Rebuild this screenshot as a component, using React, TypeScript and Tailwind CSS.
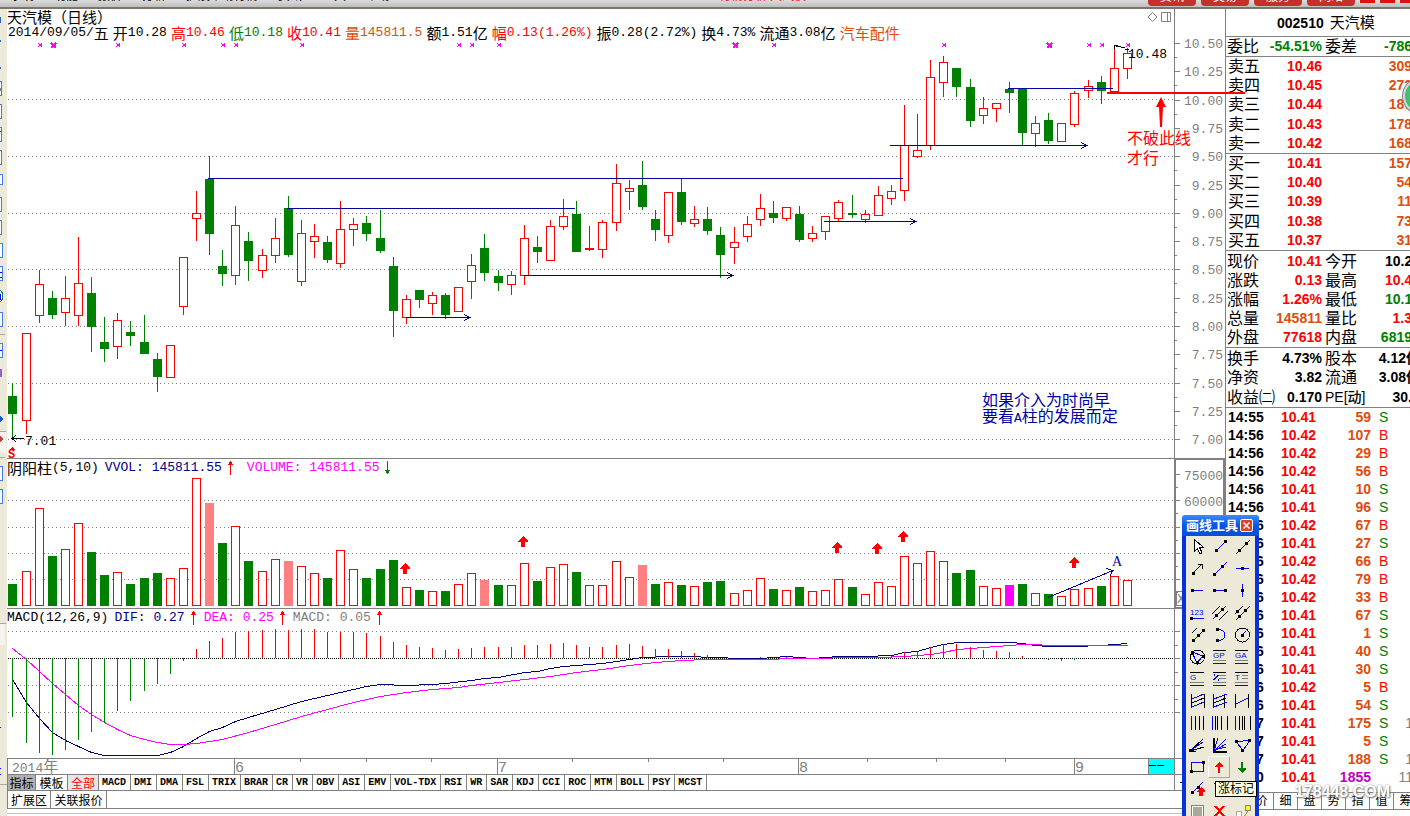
import type { ReactNode } from "react";

const RED = "#ff0000";
const GREEN = "#008000";
const GRAY = "#808080";
const NAVY = "#00007f";
const PEN = "#0000a0";
const PINK = "#ff00ff";

type Tone = "r" | "g";

// tone, high, body top, body bottom, low, volume top
type Bar = [Tone, number, number, number, number, number];

const bars: Bar[] = [
  ["g", 383, 396, 414, 439, 584],
  ["r", 333, 333, 421, 434, 571],
  ["r", 270, 284, 316, 323, 508],
  ["g", 291, 298, 315, 319, 556],
  ["r", 276, 298, 313, 326, 549],
  ["r", 237, 283, 316, 326, 523],
  ["g", 277, 293, 327, 352, 552],
  ["g", 317, 342, 349, 362, 575],
  ["r", 313, 320, 347, 359, 572],
  ["g", 321, 332, 336, 346, 584],
  ["g", 315, 342, 354, 354, 578],
  ["g", 353, 359, 377, 392, 573],
  ["r", 345, 345, 378, 378, 578],
  ["r", 257, 257, 307, 315, 568],
  ["r", 191, 213, 219, 241, 478],
  ["g", 156, 179, 234, 255, 503],
  ["g", 250, 266, 274, 286, 543],
  ["r", 206, 225, 276, 285, 526],
  ["g", 232, 241, 261, 281, 561],
  ["r", 249, 255, 271, 278, 571],
  ["r", 218, 238, 256, 263, 559],
  ["g", 196, 208, 255, 257, 561],
  ["r", 220, 233, 282, 286, 566],
  ["r", 224, 236, 242, 258, 573],
  ["g", 236, 242, 260, 263, 578],
  ["r", 201, 229, 264, 268, 550],
  ["r", 218, 224, 230, 246, 569],
  ["g", 216, 223, 234, 241, 578],
  ["g", 210, 238, 251, 253, 569],
  ["g", 257, 266, 311, 337, 560],
  ["r", 295, 299, 318, 324, 587],
  ["g", 290, 290, 300, 308, 590],
  ["r", 292, 295, 304, 315, 591],
  ["g", 293, 295, 315, 319, 591],
  ["r", 287, 287, 312, 312, 584],
  ["r", 254, 265, 282, 299, 573],
  ["g", 234, 248, 273, 281, 580],
  ["g", 270, 276, 283, 291, 585],
  ["r", 271, 275, 285, 295, 585],
  ["r", 225, 238, 276, 285, 563],
  ["g", 236, 247, 252, 263, 581],
  ["r", 220, 226, 261, 261, 567],
  ["r", 199, 216, 227, 230, 564],
  ["g", 201, 214, 252, 252, 572],
  ["r", 226, 248, 250, 251, 585],
  ["r", 220, 222, 250, 258, 585],
  ["r", 164, 183, 223, 231, 561],
  ["r", 180, 188, 192, 210, 577],
  ["g", 161, 185, 207, 210, 565],
  ["g", 210, 219, 230, 241, 584],
  ["r", 192, 192, 236, 243, 582],
  ["g", 179, 192, 222, 225, 585],
  ["r", 206, 219, 224, 227, 586],
  ["g", 207, 219, 231, 235, 582],
  ["g", 227, 235, 255, 278, 581],
  ["r", 227, 242, 248, 264, 593],
  ["r", 216, 224, 237, 242, 590],
  ["r", 194, 208, 220, 226, 578],
  ["g", 201, 213, 218, 223, 589],
  ["r", 207, 207, 219, 221, 590],
  ["g", 206, 214, 240, 242, 587],
  ["r", 226, 233, 239, 242, 591],
  ["r", 216, 216, 232, 240, 590],
  ["r", 200, 202, 219, 222, 579],
  ["g", 195, 213, 215, 218, 587],
  ["r", 210, 214, 220, 223, 594],
  ["r", 186, 195, 216, 216, 582],
  ["r", 185, 191, 199, 205, 586],
  ["r", 105, 145, 191, 201, 556],
  ["r", 114, 150, 157, 158, 563],
  ["r", 60, 77, 146, 150, 551],
  ["r", 56, 62, 83, 97, 561],
  ["g", 68, 68, 87, 97, 573],
  ["g", 79, 87, 121, 127, 570],
  ["r", 97, 108, 116, 124, 586],
  ["r", 103, 103, 109, 122, 588],
  ["g", 82, 89, 93, 113, 585],
  ["g", 88, 88, 133, 146, 584],
  ["r", 116, 123, 134, 147, 593],
  ["g", 113, 120, 141, 144, 594],
  ["r", 123, 123, 142, 142, 596],
  ["r", 91, 93, 125, 127, 589],
  ["r", 80, 86, 91, 98, 588],
  ["g", 76, 82, 91, 104, 586],
  ["r", 48, 68, 92, 92, 576],
  ["r", 48, 53, 69, 79, 580],
];

const specialVolume: Record<number, string> = {
  15: "#ff8080",
  21: "#ff8080",
  36: "#ff8080",
  48: "#ff8080",
  76: PINK,
};

const ZERO = 658;

// tip of every MACD stick, one for each bar
const sticks = [
  717, 743, 753, 755, 750, 740, 732, 723, 711, 701, 691, 684, 674, 661, 649, 641, 638, 632, 631, 630, 629, 630, 629,
  629, 632, 632, 632, 633, 636, 642, 645, 647, 648, 650, 649, 648, 647, 647, 647, 645, 645, 644, 643, 645, 647, 647,
  645, 644, 646, 649, 649, 651, 653, 655, 658, 658, 658, 657, 657, 657, 658, 658, 658, 657, 657, 657, 657, 656, 652,
  651, 647, 644, 644, 647, 650, 651, 652, 656, 658, 660, 661, 660, 658, 658, 658, 657,
];

const dif =
  "12,679 26,702 39,718 52,732 65,740 78,746 91,752 104,755 157,755 170,752 183,746 196,738 209,731 222,727 235,721 248,717 275,709 301,701 327,695 353,689 366,686 380,684 406,685 432,684 445,683 471,680 484,678 498,677 524,672 537,671 550,668 563,666 602,663 616,661 629,659 642,657 668,656 694,656 707,657 720,657 734,658 760,658 786,656 799,657 812,658 838,656 865,656 891,655 904,652 917,651 930,647 943,644 957,642 1010,642 1022,643 1035,645 1048,646 1075,646 1101,645 1114,644 1127,643";
const dea =
  "12,648 26,659 39,671 52,683 65,694 78,705 91,714 104,722 117,729 130,735 144,739 157,742 170,744 183,744 196,743 222,739 248,732 275,724 301,716 327,709 353,702 380,696 406,692 432,689 458,687 471,685 498,682 524,679 550,676 576,672 602,669 629,665 655,662 681,660 707,659 734,659 825,658 838,657 878,657 904,656 917,655 930,654 943,652 957,649 983,647 1009,645 1022,644 1035,644 1048,645 1127,645";

const barX = (i: number) => 12 + 13 * i + Math.ceil(i / 9);

const readout = [
  { label: "2014/09/05/", tail: "五", tone: "text-black" },
  { head: "开", label: "10.28", tone: "text-black" },
  { head: "高", label: "10.46", tone: "text-[#ff0000]" },
  { head: "低", label: "10.18", tone: "text-[#008000]" },
  { head: "收", label: "10.41", tone: "text-[#ff0000]" },
  { head: "量", label: "145811.5", tone: "text-[#e04c0c]" },
  { head: "额", label: "1.51", tail: "亿", tone: "text-black" },
  { head: "幅", label: "0.13(1.26%)", tone: "text-[#ff0000]" },
  { head: "振", label: "0.28(2.72%)", tone: "text-black" },
  { head: "换", label: "4.73%", tone: "text-black" },
  { head: "流通", label: "3.08", tail: "亿", tone: "text-black" },
  { head: "汽车配件", label: "", tone: "text-[#e04c0c]" },
];

const signals = [40, 118, 184, 223, 236, 302, 459, 472, 499, 774, 944, 1089, 1102, 1128];
const strongSignals = [53, 735, 1049];

const indicators = [
  "MACD", "DMI", "DMA", "FSL", "TRIX", "BRAR", "CR", "VR", "OBV", "ASI", "EMV", "VOL-TDX", "RSI", "WR", "SAR", "KDJ",
  "CCI", "ROC", "MTM", "BOLL", "PSY", "MCST",
];

interface Depth {
  label: string;
  price: string;
  size: string;
}

const asks: Depth[] = [
  { label: "卖五", price: "10.46", size: "309" },
  { label: "卖四", price: "10.45", size: "272" },
  { label: "卖三", price: "10.44", size: "187" },
  { label: "卖二", price: "10.43", size: "178" },
  { label: "卖一", price: "10.42", size: "168" },
];

const bids: Depth[] = [
  { label: "买一", price: "10.41", size: "157" },
  { label: "买二", price: "10.40", size: "54" },
  { label: "买三", price: "10.39", size: "11" },
  { label: "买四", price: "10.38", size: "73" },
  { label: "买五", price: "10.37", size: "31" },
];

const R = "text-[#ff0000]";
const G = "text-[#008000]";
const O = "text-[#e04c0c]";
const K = "text-black";

const quotes = [
  ["现价", "10.41", R, "今开", "10.28", K],
  ["涨跌", "0.13", R, "最高", "10.46", R],
  ["涨幅", "1.26%", R, "最低", "10.18", G],
  ["总量", "145811", O, "量比", "1.3", R + " pr-2"],
  ["外盘", "77618", R, "内盘", "6819", G + " pr-2"],
];

const basics = [
  ["换手", "4.73%", K, "股本", "4.12亿", K],
  ["净资", "3.82", K, "流通", "3.08亿", K],
  ["收益㈡", "0.170", K, "PE[动]", "30.", K + " pr-2"],
];

const trades = [
  ["14:55", "10.41", "59", "S", ""],
  ["14:56", "10.42", "107", "B", ""],
  ["14:56", "10.42", "29", "B", ""],
  ["14:56", "10.42", "56", "B", ""],
  ["14:56", "10.41", "10", "S", ""],
  ["14:56", "10.41", "96", "S", ""],
  ["14:56", "10.42", "67", "B", ""],
  ["14:56", "10.41", "27", "S", ""],
  ["14:56", "10.42", "66", "B", ""],
  ["14:56", "10.42", "79", "B", ""],
  ["14:56", "10.42", "33", "B", ""],
  ["14:56", "10.41", "67", "S", ""],
  ["14:56", "10.41", "1", "S", ""],
  ["14:56", "10.41", "40", "S", ""],
  ["14:56", "10.41", "30", "S", ""],
  ["14:56", "10.42", "5", "B", ""],
  ["14:56", "10.41", "54", "S", ""],
  ["14:57", "10.41", "175", "S", "1"],
  ["14:57", "10.41", "5", "S", ""],
  ["14:57", "10.41", "188", "S", "1"],
  ["15:00", "10.41", "1855", "", "11"],
];

function Grid({ rows }: { rows: number[] }) {
  return (
    <>
      {rows.map((y) => (
        <line key={y} x1="8" x2="1174" y1={y + 0.5} y2={y + 0.5} stroke={GRAY} strokeDasharray="1 3" />
      ))}
    </>
  );
}

function Pen({ x1, x2, y, arrow }: { x1: number; x2: number; y: number; arrow?: boolean }) {
  return (
    <g stroke={PEN} fill="none">
      <line x1={x1} x2={x2} y1={y + 0.5} y2={y + 0.5} />
      {arrow && <path d={`M${x2 - 7} ${y - 2.5}l6 3l-6 3M${x2 - 3} ${y + 0.5}h3`} />}
    </g>
  );
}

function TrendArrow({ down }: { down?: boolean }) {
  return (
    <svg className="ml-[6px]" width="5" height="14" viewBox="0 0 5 14" shapeRendering="crispEdges" aria-hidden="true">
      {down ? (
        <path d="M2 0h1v9h2v1h-1v2h-1v1h-1v-1h-1v-2h-1v-1h2z" fill={GREEN} />
      ) : (
        <path d="M2 0h1v1h1v2h1v1h-2v10h-1v-10h-2v-1h1v-2h1z" fill={RED} />
      )}
    </svg>
  );
}

function PriceChart() {
  return (
    <svg className="block h-[417px] w-full" shapeRendering="crispEdges" role="img" aria-label="日线">
      <g transform="translate(-7 -41)">
        <Grid rows={[99, 156, 213, 269, 326, 383, 439]} />
        {signals.map((x) => (
          <path key={x} d={`M${x - 2} 43l4 4M${x + 2} 43l-4 4M${x - 1} 45h3`} stroke={PINK} strokeWidth="1.4" />
        ))}
        {strongSignals.map((x) => (
          <path key={x} d={`M${x - 2} 43l5 5M${x + 3} 43l-5 5M${x - 1} 45.5h4`} stroke={PINK} strokeWidth="2" />
        ))}
        {bars.map(([tone, high, top, bottom, low], i) => {
          const x = barX(i);
          const color = tone === "r" ? RED : GREEN;
          return (
            <g key={i}>
              <rect x={x} y={high} width="1" height={low - high} fill={color} />
              <rect
                x={x - 3.5}
                y={top + 0.5}
                width="8"
                height={bottom - top - 1}
                stroke={color}
                fill={tone === "r" ? "#fff" : color}
              />
            </g>
          );
        })}
        <Pen x1={208} x2={903} y={178} />
        <Pen x1={287} x2={575} y={208} />
        <Pen x1={406} x2={471} y={317} arrow />
        <Pen x1={524} x2={734} y={275} arrow />
        <Pen x1={824} x2={917} y={221} arrow />
        <Pen x1={890} x2={1088} y={145} arrow />
        <Pen x1={1008} x2={1113} y={88} />
        <path d="M1114.5 49v-4M1114 45.500h4M1116 46.500h5M1121 47.500h4M1125 49.500h4" stroke="#000" fill="none" />
        <path d="M12 438.500h12M16 435l-4 3.500l4 3.500" stroke="#000" fill="none" />
        <path d="M9 450l3-3l3 3z" fill={RED} />
        <g className="font-['Liberation_Mono',monospace] text-[13px]">
          <text x="1128" y="58">10.48</text>
          <text x="25" y="445">7.01</text>
          <text x="8" y="458" fill={RED} className="text-xs font-bold">S</text>
        </g>
        <g fill={PEN} className="font-['Noto_Sans_CJK_SC',sans-serif] text-base">
          <text x="982" y="406">如果介入为时尚早</text>
          <text x="982" y="422">
            要看<tspan className="font-['Liberation_Mono',monospace] text-[13px]">A</tspan>柱的发展而定
          </text>
        </g>
      </g>
    </svg>
  );
}

function VolumeChart() {
  const marks = [
    [405, 563], [523, 536], [837, 542], [877, 543], [903, 531], [1074, 557],
  ];
  return (
    <svg className="block h-[132px] w-full" shapeRendering="crispEdges" role="img" aria-label="成交量">
      <g transform="translate(-7 -476)">
        <Grid rows={[500, 527, 553, 579]} />
        {bars.map((bar, i) => {
          const special = specialVolume[i];
          const color = special ?? (bar[0] === "r" ? RED : GREEN);
          const hollow = !special && bar[0] === "r";
          return (
            <rect
              key={i}
              x={barX(i) - 3.5}
              y={bar[5] + 0.5}
              width="8"
              height={605 - bar[5]}
              stroke={color}
              fill={hollow ? "#fff" : color}
            />
          );
        })}
        {marks.map(([x, y]) => (
          <path key={x} d={`M${x} ${y}l5 5v1h-3v5h-4v-5h-3v-1z`} fill={RED} />
        ))}
        <path d="M1048 597.500L1113 570.500M1106 568.500l7 2l-3 5" stroke={PEN} fill="none" />
        <text x="1112" y="566" fill={PEN} className="font-['Liberation_Serif',serif] text-sm">A</text>
      </g>
    </svg>
  );
}

function MacdChart() {
  return (
    <svg className="block h-[132px] w-full" shapeRendering="crispEdges" role="img" aria-label="MACD">
      <g transform="translate(-7 -626)">
        <Grid rows={[631, 685, 712]} />
        <line x1="8" x2="1174" y1="658.5" y2="658.5" stroke="#000" strokeDasharray="1 1" />
        <g fill="none">
          <polyline points={dif} stroke={NAVY} transform="translate(0.5 0.5)" />
          <polyline points={dea} stroke={PINK} transform="translate(0.5 0.5)" />
        </g>
        {sticks.map((y, i) => (
          <rect
            key={i}
            x={barX(i)}
            y={Math.min(y, ZERO)}
            width="1"
            height={Math.abs(y - ZERO)}
            fill={y > ZERO ? GREEN : RED}
          />
        ))}
      </g>
    </svg>
  );
}

function DateAxis() {
  const months = [
    [234, "6"], [497, "7"], [798, "8"], [1074, "9"],
  ] as const;
  return (
    <div className="flex h-4 justify-between border-t border-l border-[#808080]">
      <svg className="block h-full min-w-0 flex-1" shapeRendering="crispEdges" role="img" aria-label="日期">
        <g transform="translate(-8 0)">
          <path
            d="M47.500 0v3M300.500 0v3M366.500 0v3M431.500 0v3M572.500 0v3M648.500 0v3M723.500 0v3M867.500 0v3M936.500 0v3M1005.500 0v3"
            stroke={GRAY}
          />
          <g fill={GRAY} className="font-['Liberation_Mono','Noto_Sans_CJK_SC',monospace] text-[13px]">
            <text x="12" y="13">
              2014<tspan className="text-[15px]">年</tspan>
            </text>
            {months.map(([x, name]) => (
              <g key={name}>
                <rect x={x} y="0" width="1" height="15" />
                <text x={x + 1} y="13" className="text-[15px]">{name}</text>
              </g>
            ))}
          </g>
        </g>
      </svg>
      <svg className="block h-full w-[26px] shrink-0 border-l border-[#808080] bg-[#00ffff]" shapeRendering="crispEdges" aria-hidden="true">
        <path d="M0 6.500h7M8 6.500h7" stroke="#000" />
      </svg>
    </div>
  );
}

function PriceAxis() {
  const prices = Array.from({ length: 15 }, (_, i) => ({
    label: (10.5 - i * 0.25).toFixed(2),
    y: Math.round(43 + i * 28.3),
  }));
  return (
    <svg
      className="block h-[782px] w-[51px] shrink-0"
      shapeRendering="crispEdges"
      role="img"
      aria-label="坐标"
    >
      <g transform="translate(-1174 -9)" fill={GRAY} className="font-['Liberation_Mono',monospace] text-[13px]">
        <rect x="1174" y="9" width="1" height="782" />
        {prices.map(({ label, y }, i) => (
          <g key={label}>
            <rect x="1174" y={y} width="6" height="1" />
            {i < 14 && <rect x="1174" y={y + 14} width="3" height="1" />}
            <text x="1223" y={y + 5} textAnchor="end">{label}</text>
          </g>
        ))}
        <rect x="1175" y="459" width="49" height="149" fill="none" stroke={GRAY} strokeWidth="2" />
        {[474, 500, 527, 553, 579].map((y) => (
          <g key={y}>
            <rect x="1174" y={y} width="6" height="1" />
            <rect x="1174" y={y + 13} width="4" height="1" />
          </g>
        ))}
        <text x="1223" y="480" textAnchor="end">75000</text>
        <text x="1223" y="506" textAnchor="end">60000</text>
        <path d="M1176 591.500h48M1176.500 591v14h48" fill="none" stroke={GRAY} />
        <text x="1177" y="603">X10</text>
        {[631, 645, 658, 672, 685, 699, 712].map((y) => (
          <rect key={y} x="1174" y={y} width={y % 27 === 10 ? 6 : 4} height="1" />
        ))}
        <path d="M1174 758.500h51M1174 774.500h51M1174 790.500h51" stroke={GRAY} />
        <path d="M1180 782.500h4" stroke="#000" />
      </g>
    </svg>
  );
}

function IndicatorTabs() {
  return (
    <nav className="flex h-[17px] border-y border-l border-[#808080] font-['Noto_Sans_CJK_SC',sans-serif] text-xs leading-[15px]">
      <button type="button" className="w-[28px] border-r border-[#808080] bg-[#b0b0b0]">指标</button>
      <button type="button" className="w-[32px] border-r border-[#808080]">模板</button>
      <button type="button" className="w-[31px] border-r border-[#808080] bg-[#e6e6e6] text-[#ff0000]">全部</button>
      {indicators.map((name) => (
        <button
          key={name}
          type="button"
          className="border-r border-[#808080] pr-1 pl-[3px] font-['Liberation_Mono',monospace] text-[10px] font-bold"
        >
          {name}
        </button>
      ))}
    </nav>
  );
}

function DepthTable({ rows }: { rows: Depth[] }) {
  return (
    <table className="h-[96px] w-[194px] table-fixed">
      <tbody>
        {rows.map((row) => (
          <tr key={row.label} className="h-[19px]">
            <th className="w-[40px] p-0 pl-[2px] text-left text-base leading-[19px] font-normal">{row.label}</th>
            <td className="w-[56px] p-0 text-right text-sm leading-[19px] font-bold text-[#ff0000]">{row.price}</td>
            <td className="p-0 pr-2 text-right text-sm leading-[19px] font-bold text-[#e04c0c]">{row.size}</td>
          </tr>
        ))}
      </tbody>
    </table>
  );
}

function QuoteTable({ rows }: { rows: string[][] }) {
  return (
    <table className="w-[194px] table-fixed whitespace-nowrap">
      <tbody>
        {rows.map(([left, value, tone, right, other, otherTone]) => (
          <tr key={left} className="h-[19px]">
            <th className="w-[40px] p-0 pl-px text-left text-base leading-[19px] font-normal">{left}</th>
            <td className={`w-[56px] p-0 text-right text-sm leading-[19px] font-bold ${tone}`}>{value}</td>
            <th className="w-[40px] p-0 pl-[3px] text-left text-base leading-[19px] font-normal">
              {right.startsWith("PE") ? <span className="text-sm font-medium">{right}</span> : right}
            </th>
            <td className={`p-0 text-right text-sm leading-[19px] font-bold ${otherTone}`}>{other}</td>
          </tr>
        ))}
      </tbody>
    </table>
  );
}

function SidePanel() {
  return (
    <aside className="flex w-[185px] shrink-0 flex-col overflow-hidden border-l border-[#808080] font-['Liberation_Sans','Noto_Sans_CJK_SC',sans-serif]">
      <h2 className="flex h-[27px] items-center gap-[6px] pl-[51px] text-sm font-bold whitespace-nowrap">
        002510 <span className="text-[15px] font-normal">天汽模</span>
      </h2>
      <div className="h-5 border-t border-[#808080]">
        <QuoteTable rows={[["委比", "-54.51%", G, "委差", "-786", G + " pr-2"]]} />
      </div>
      <div className="border-t border-[#808080]">
        <DepthTable rows={asks} />
      </div>
      <div className="border-t border-[#808080]">
        <DepthTable rows={bids} />
      </div>
      <div className="h-[97px] border-t border-[#808080] pt-px">
        <QuoteTable rows={quotes} />
      </div>
      <div className="h-[61px] border-y border-[#808080] pt-px">
        <QuoteTable rows={basics} />
      </div>
      <table className="w-[187px] table-fixed text-sm font-bold">
        <tbody>
          {trades.map(([time, price, size, side, count], i) => (
            <tr key={i} className="h-[18px] leading-[18px]">
              <td className="w-[55px] p-0 pl-[2px]">{time}</td>
              <td className="w-[40px] p-0 text-[#ff0000]">{price}</td>
              <td className={`w-[50px] p-0 text-right ${side ? "text-[#e04c0c]" : "text-[#c000c0]"}`}>{size}</td>
              <td className={`w-[20px] p-0 pl-2 font-normal ${side === "B" ? R : G}`}>{side}</td>
              <td className="p-0 text-right font-normal text-[#808080]">{count}</td>
            </tr>
          ))}
        </tbody>
      </table>
      <nav className="mt-[6px] flex h-[18px] shrink-0 border-y border-[#808080] text-xs leading-4">
        {["笔", "价", "细", "盘", "势", "指", "值", "筹"].map((name) => (
          <button key={name} type="button" className="w-6 shrink-0 border-r border-[#808080]">
            {name}
          </button>
        ))}
      </nav>
    </aside>
  );
}

const B = "#0000ff";

function Dots({ at }: { at: number[][] }) {
  return (
    <>
      {at.map(([x, y]) => (
        <rect key={`${x}-${y}`} x={x - 1} y={y - 1} width="3" height="3" fill="#000" />
      ))}
    </>
  );
}

const glyph = "font-['Liberation_Sans',sans-serif] text-[8px]";

const tools: { name: string; icon: ReactNode }[] = [
  { name: "选择", icon: <path d="M8.500 3.500v12l3-3l2 5h2v-2l-2-4h4z" fill="#fff" stroke="#000" /> },
  { name: "线段", icon: <><path d="M8 15l9-9" stroke={B} /><Dots at={[[8, 14], [17, 5]]} /></> },
  { name: "直线", icon: <><path d="M6 18L20 4" stroke="#000" /><path d="M9 15l7-7" stroke={B} /><Dots at={[[9, 14], [16, 7]]} /></> },
  { name: "箭头", icon: <><path d="M6 16L16 6" stroke={B} /><path d="M12 6.500h4.500v4.500" fill="none" stroke="#000" /><Dots at={[[7, 15]]} /></> },
  { name: "射线", icon: <><path d="M6 17L19 4" stroke={B} /><Dots at={[[6, 16], [14, 8]]} /></> },
  { name: "价格线", icon: <><path d="M6 10.500h13" stroke={B} /><Dots at={[[12, 10]]} /></> },
  { name: "水平射线", icon: <><path d="M5 10.500h12" stroke={B} /><Dots at={[[6, 10]]} /></> },
  { name: "水平线段", icon: <><path d="M6 10.500h12" stroke={B} /><Dots at={[[6, 10], [17, 10]]} /></> },
  { name: "垂直线", icon: <><path d="M12.500 4v13" stroke={B} /><Dots at={[[12, 10]]} /></> },
  { name: "标注", icon: <><text x="4" y="13" fill={B} className={glyph}>123</text><path d="M4 16.500h14" stroke={B} /><Dots at={[[5, 16]]} /></> },
  { name: "平行线", icon: <><path d="M4 12L12 4M11 18L20 9" stroke="#000" /><path d="M5 17L18 4" stroke={B} /><Dots at={[[8, 13], [14, 7]]} /></> },
  { name: "平行射线", icon: <><path d="M5 12l8-8" stroke="#000" /><path d="M6 18L20 4" stroke={B} /><Dots at={[[9, 14], [15, 8], [7, 9]]} /></> },
  { name: "平行线段", icon: <><path d="M6 9l5-5" stroke="#000" /><path d="M7 17L18 6" stroke={B} /><Dots at={[[7, 16], [12, 11], [17, 6]]} /></> },
  { name: "圆弧", icon: <><path d="M9 5.500q8 0 8 5.500t-8 6" fill="none" stroke={B} /><Dots at={[[9, 5], [9, 16]]} /></> },
  { name: "圆", icon: <><circle cx="12.500" cy="11" r="7" fill="none" stroke="#000" /><path d="M12 11l4-4" stroke={B} /><Dots at={[[12, 11]]} /></> },
  { name: "外接圆", icon: <><circle cx="11.500" cy="11" r="7" fill="none" stroke="#000" /><path d="M6 6l11 4l-6 7z" fill="none" stroke={B} /><Dots at={[[6, 7], [17, 10], [11, 16]]} /></> },
  { name: "黄金价位", icon: <><path d="M5 4.500h13" stroke="#000" /><text x="5" y="12" fill={B} className={glyph}>GP</text><path d="M5 14.500h13" stroke={GRAY} /><path d="M5 17.500h13" stroke={B} /></> },
  { name: "黄金目标", icon: <><path d="M5 4.500h13" stroke="#000" /><text x="5" y="12" fill={B} className={glyph}>GA</text><path d="M5 14.500h13" stroke={GRAY} /><path d="M5 17.500h13" stroke={B} /></> },
  { name: "黄金分割", icon: <><path d="M4 4.500h14" stroke="#000" /><text x="4" y="12" fill={B} className={glyph}>G</text><path d="M4 14.500h14" stroke={GRAY} /><path d="M4 17.500h14" stroke={B} /></> },
  { name: "百分比线", icon: <><path d="M5 4.500h13" stroke="#000" /><path d="M6 12l4-5M6 7h1M10 12h1" stroke={B} strokeWidth="1.500" /><path d="M11 7.500h7M11 10.500h7M5 14.500h13" stroke={GRAY} /><path d="M5 17.500h13" stroke={B} /></> },
  { name: "波段线", icon: <><path d="M5 4.500h13" stroke="#000" /><text x="5" y="12" fill={B} className={glyph}>T</text><path d="M12 7.500h6M12 10.500h6M5 14.500h13" stroke={GRAY} /><path d="M5 17.500h13" stroke={B} /></> },
  { name: "线性回归", icon: <><path d="M5.500 4v14M18.500 4v14M6 13l12-5" stroke="#000" /><path d="M6 9l12-5M6 17l12-5" stroke={B} /></> },
  { name: "延长回归", icon: <><path d="M5.500 4v14M16.500 4v14M6 13l12-5" stroke="#000" /><path d="M6 9l13-5M6 17l13-5" stroke={B} /></> },
  { name: "回归线", icon: <><path d="M5.500 4v14M18.500 4v14" stroke="#000" /><path d="M6 14l12-6" stroke={B} /></> },
  { name: "周期线", icon: <><path d="M5.500 4v14" stroke={B} /><path d="M9.500 4v14M13.500 4v14M17.500 4v14" stroke="#000" /></> },
  { name: "费波拉契线", icon: <><path d="M4.500 4v14" stroke={B} /><path d="M7.500 4v14M9.500 4v14M13.500 4v14M19.500 4v14" stroke="#000" /></> },
  { name: "阶梯周期线", icon: <><path d="M5.500 4v14" stroke={B} /><path d="M9.500 4v14M12.500 4v14M14.500 4v14M20.500 4v14" stroke="#000" /></> },
  { name: "阻速线", icon: <><path d="M4 17L17 5M4 17l14-4M4 17h6" stroke="#000" /><path d="M5 16l12-8" stroke={B} /><Dots at={[[4, 16]]} /></> },
  { name: "甘氏线", icon: <><path d="M5.500 4v13M5 17.500h14" stroke="#000" strokeWidth="2" /><path d="M6 17l4-13M6 17L18 5M6 17l12-7M6 16l12-3" stroke={B} /></> },
  { name: "三角形", icon: <><path d="M6 7.500l14-1l-7 10z" fill="none" stroke={B} /><Dots at={[[6, 7], [19, 6], [12, 16]]} /></> },
  { name: "矩形", icon: <><rect x="5.500" y="6.500" width="12" height="9" fill="none" stroke={B} /><Dots at={[[5, 15], [17, 6]]} /></> },
  { name: "涨标记", icon: <path d="M11 6l4 4v1h-3v6h-2v-6h-3v-1z" fill={RED} /> },
  { name: "跌标记", icon: <path d="M12 17l-4-4v-1h3v-6h2v6h3v1z" fill={GREEN} /> },
  { name: "自动标记", icon: <><path d="M6 15L17 4" stroke={B} /><Dots at={[[6, 14], [12, 9]]} /><path d="M15 9l4 4v1h-2v4h-4v-4h-2v-1z" fill={RED} /></> },
  { name: "文字", icon: <path d="M6 5h10M11 5v12" stroke={B} /> },
  { name: "显隐", icon: <path d="M6 6h10v10h-10z" fill="none" stroke={B} /> },
  { name: "隐藏自画线", icon: <><rect x="5.500" y="5.500" width="12" height="12" fill="#fff" stroke={GRAY} /><rect x="7" y="7" width="9" height="9" fill="#aca899" /></> },
  { name: "删除", icon: <path d="M7 6l9 10M16 6L7 16" stroke={RED} strokeWidth="2" /> },
  { name: "画线管理", icon: <><path d="M6.500 11.500h5v6h-5zM14 17l4-6" fill="#fff" stroke="#aca899" /><circle cx="18" cy="8" r="3" fill="#ffff00" stroke={GRAY} /></> },
];

function DrawingPalette() {
  return (
    <section
      aria-label="画线工具"
      className="absolute top-[515px] right-[151px] w-[77px] rounded-t bg-[#0831d9] px-1 font-['Liberation_Sans','Noto_Sans_CJK_SC',sans-serif]"
    >
      <header className="-mx-1 flex h-[21px] items-center justify-between rounded-t bg-linear-to-b from-[#3c8cf8] via-[#0a55e6] to-[#0450d8] pr-[6px] pl-1 text-white">
        <h2 className="text-[13px] leading-4 font-bold whitespace-nowrap">画线工具</h2>
        <button
          type="button"
          aria-label="关闭"
          className="flex size-[13px] items-center justify-center rounded-[2px] border border-white bg-[#dd4422]"
        >
          <svg width="7" height="7" viewBox="0 0 7 7" aria-hidden="true">
            <path d="M0.500 0.500l6 6M6.500 0.500l-6 6" stroke="#fff" strokeWidth="1.500" />
          </svg>
        </button>
      </header>
      <div className="grid grid-cols-[22px_22px_22px] bg-[#ece9d8] pr-[3px]">
        {tools.map(({ name, icon }) => (
          <button
            key={name}
            type="button"
            aria-label={name}
            className={
              name === "涨标记"
                ? "size-[22px] border border-t-white border-r-[#aca899] border-b-[#aca899] border-l-white"
                : "size-[22px]"
            }
          >
            <svg
              className={name === "涨标记" ? "-m-px block size-[22px]" : "block size-[22px]"}
              viewBox="0 0 22 22"
              shapeRendering="crispEdges"
              aria-hidden="true"
            >
              {icon}
            </svg>
          </button>
        ))}
      </div>
      <span
        role="tooltip"
        className="absolute top-[266px] left-[33px] border border-black bg-[#ffffe1] px-[2px] text-xs leading-[14px] whitespace-nowrap"
      >
        涨标记
      </span>
    </section>
  );
}

// slice of the docked toolbar that stays visible at the window's left edge
function DockedToolbar() {
  const boxes = [81, 104, 127, 150, 174, 197, 220, 243, 266, 312, 343, 466, 489];
  return (
    <svg className="block w-[7px] shrink-0 bg-[#ece9d8]" shapeRendering="crispEdges" aria-hidden="true">
      <g transform="translate(0 -9)">
        {[17, 40, 67].map((y) => (
          <rect key={y} x="0" y={y} width="1" height={y === 17 ? 6 : 2} fill="#2a62c8" />
        ))}
        {boxes.map((y) => (
          <rect key={y} x="-6.500" y={y + 0.5} width={y > 240 || y === 174 ? 9 : 8} height={y === 174 ? 10 : 14} fill="#fff" stroke="#3c7fe8" />
        ))}
        <path d="M0 88h1v3h-1z" fill={GRAY} />
        <path d="M0 131h1v1h-1z" fill={RED} />
        <path d="M0 272.500h2M0 277.500h2M0 350.500h2" stroke={B} />
        <circle cx="-4" cy="296" r="7" fill="#fff" stroke="#008080" />
        <rect x="0" y="294" width="1" height="6" fill={B} />
        <rect x="0" y="369" width="2" height="8" fill="#9060d0" />
        <path d="M0 416l3 3l-3 4z" fill="#1058c0" />
        <path d="M0 334.500h5M0 431.500h6M0 457.500h5M0 623.500h6M0 784.500h7" stroke="#aca899" />
        <rect x="0" y="432" width="6" height="21" fill="#f6f4ec" />
        <path d="M0 435l3 4l-3 4z" fill="#c04040" />
        <rect x="0" y="624" width="5" height="21" fill="#f6f4ec" />
        <path d="M0 727h1v1h-1zM0 768h1v1h-1zM0 774h1v1h-1z" fill={B} />
      </g>
    </svg>
  );
}

function TopBar() {
  return (
    <header className="flex h-[9px] shrink-0 justify-between overflow-hidden border-b-2 border-[#7a766a] bg-linear-to-b from-[#dcdcdc] to-[#bebebe] font-['Noto_Sans_CJK_SC',sans-serif] text-xs leading-[14px] whitespace-nowrap">
      <nav className="-mt-[12px] flex gap-5 pl-[10px]">
        {["系统", "功能", "报价", "分析", "扩展市场行情", "资讯", "工具", "帮助"].map((name) => (
          <a key={name} href="#">{name}</a>
        ))}
      </nav>
      <p className="-mt-[12px] mr-[54px] ml-auto pr-[288px] text-[#ff0000]">行情分析 天汽模</p>
      <div className="-ml-[0px] flex gap-[5px]">
        {["资讯", "交易", "服务", "网站"].map((name) => (
          <button
            key={name}
            type="button"
            className="flex h-[6px] w-12 justify-center overflow-hidden rounded-b bg-[#c4302c] text-white"
          >
            <span className="-mt-[11px]">{name}</span>
          </button>
        ))}
        <i className="h-[3px] w-[15px] bg-[#e01010]" />
        <i className="h-[3px] w-[15px] bg-[#e01010]" />
        <i className="h-[3px] w-[10px] bg-[#e01010]" />
      </div>
    </header>
  );
}

export default function App() {
  return (
    <div className="relative flex h-screen flex-col overflow-hidden bg-white text-black">
      <TopBar />
      <div className="flex min-h-0 flex-1">
        <DockedToolbar />
        <main className="min-w-0 flex-1 font-['Liberation_Mono','Noto_Sans_CJK_SC',monospace] text-[13px]">
          <div className="flex">
            <div className="min-w-0 flex-1">
              <section>
                <div className="flex h-[15px] items-center justify-between pr-[2px]">
                  <h1 className="font-['Noto_Sans_CJK_SC',sans-serif] text-[15px] leading-4">天汽模（日线）</h1>
                  <svg width="25" height="12" viewBox="0 0 25 12" fill="none" stroke={GRAY} aria-hidden="true">
                    <path d="M5.500 1.500l4.500 4.500l-4.500 4.500l-4.500-4.500zM14.500 1.500h9v9h-9zM20.500 1.500v9" />
                  </svg>
                </div>
                <p className="flex h-[17px] items-center gap-1 overflow-hidden pl-px leading-4 whitespace-nowrap">
                  {readout.map(({ head, label, tail, tone }) => (
                    <span key={label + head} className={`flex items-center ${tone}`}>
                      {head && <span className="font-['Noto_Sans_CJK_SC',sans-serif] text-[15px]">{head}</span>}
                      {label}
                      {tail && <span className="font-['Noto_Sans_CJK_SC',sans-serif] text-[15px]">{tail}</span>}
                    </span>
                  ))}
                </p>
                <PriceChart />
              </section>
              <section className="border-t border-[#808080]">
                <p className="flex h-[17px] items-center leading-4 whitespace-nowrap">
                  <span className="font-['Noto_Sans_CJK_SC',sans-serif] text-[15px]">阴阳柱</span>(5,10)
                  <span className="ml-[6px] text-[#00007f]">VVOL: 145811.55</span>
                  <TrendArrow />
                  <span className="ml-[14px] text-[#ff00ff]">VOLUME: 145811.55</span>
                  <TrendArrow down />
                </p>
                <VolumeChart />
              </section>
              <section className="border-t border-[#808080]">
                <p className="flex h-[17px] items-center leading-4 whitespace-nowrap">
                  MACD(12,26,9)
                  <span className="ml-[6px] text-[#00007f]">DIF: 0.27</span>
                  <TrendArrow />
                  <span className="ml-2 text-[#ff00ff]">DEA: 0.25</span>
                  <TrendArrow />
                  <span className="ml-2 text-[#808080]">MACD: 0.05</span>
                  <TrendArrow />
                </p>
                <MacdChart />
              </section>
              <DateAxis />
              <IndicatorTabs />
            </div>
            <PriceAxis />
          </div>
          <nav className="flex h-[18px] border-b border-l border-[#808080] font-['Noto_Sans_CJK_SC',sans-serif] text-xs leading-4">
            <button type="button" className="w-[43px] border-r border-[#808080]">扩展区</button>
            <button type="button" className="w-14 border-r border-[#808080]">关联报价</button>
          </nav>
          <div className="mt-1 border-t border-[#c0c0c0]" />
        </main>
        <SidePanel />
      </div>

      <div className="absolute top-[92px] right-[165px] w-[138px] border-t-2 border-[#ff0000] font-['Noto_Sans_CJK_SC',sans-serif] text-base leading-5 text-[#ff0000]">
        <svg className="mt-[3px] ml-[48px] block" width="12" height="30" viewBox="0 0 12 30" aria-hidden="true">
          <path d="M6 0l5 10h-3l-1 20h-2l-1-20h-3z" fill={RED} />
        </svg>
        <p className="ml-[20px]">
          不破此线
          <br />
          才行
        </p>
      </div>

      <span className="absolute top-[78px] -right-[29px] size-9 rounded-full border-2 border-[#d8d8d8] bg-[#40c070] shadow-md ring-1 ring-[#808080]" />

      <DrawingPalette />

      <p className="absolute right-[20px] bottom-[14px] font-['Liberation_Sans',sans-serif] text-base leading-5 font-bold text-white [text-shadow:1px_1px_2px_#707070,0_0_2px_#a0a0a0]">
        178448.COM
      </p>
    </div>
  );
}
